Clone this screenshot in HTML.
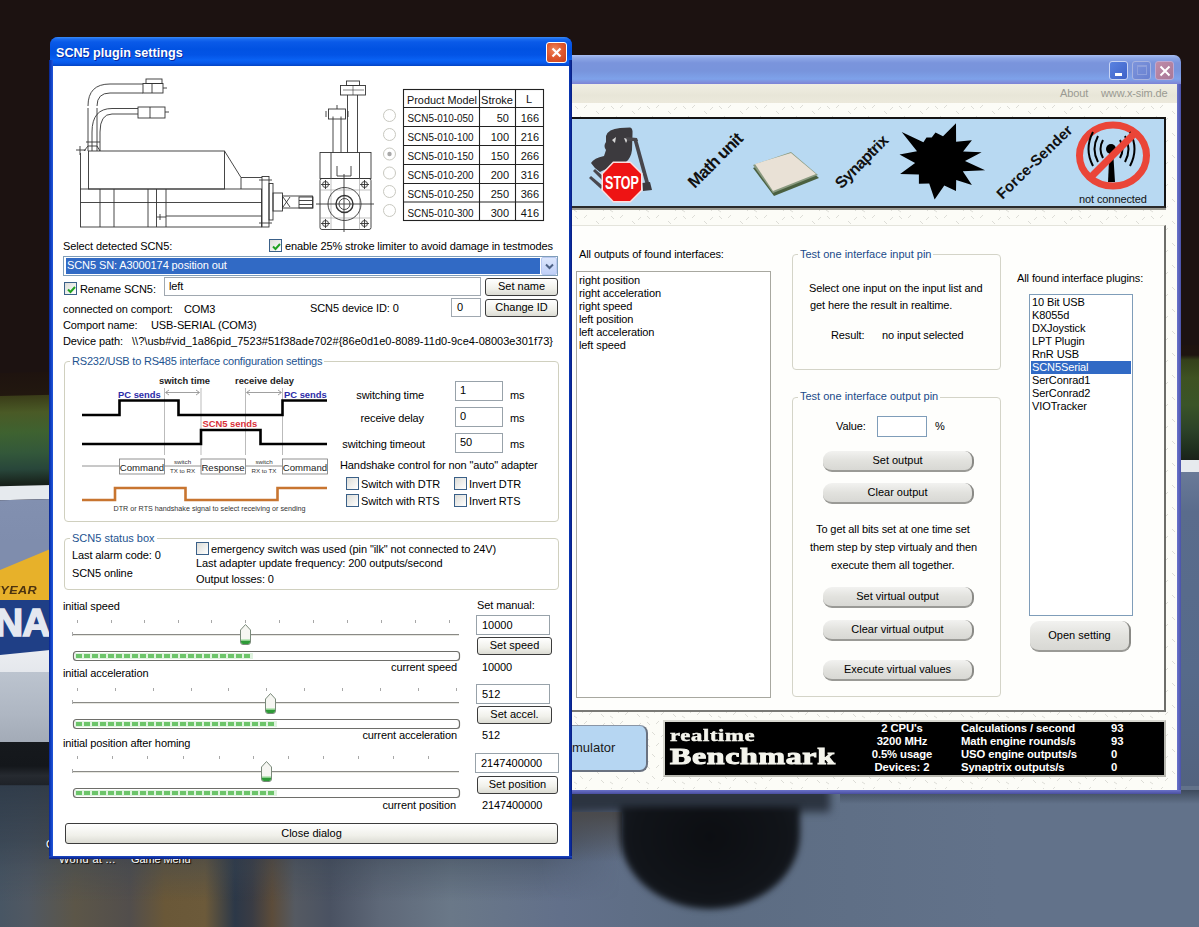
<!DOCTYPE html>
<html><head><meta charset="utf-8">
<style>
*{box-sizing:border-box;margin:0;padding:0}
html,body{width:1199px;height:927px;overflow:hidden}
body{position:relative;font-family:"Liberation Sans",sans-serif;font-size:11px;color:#000;background:#1b1010}
.a{position:absolute}
.t{position:absolute;white-space:nowrap;font-size:11px;line-height:13px;letter-spacing:-0.1px}
/* desktop */
#desk{position:absolute;left:0;top:0;width:1199px;height:927px;overflow:hidden}
/* windows */


.btn{position:absolute;border:1px solid #3c3c3c;border-radius:3px;background:linear-gradient(#fff,#f0f0ea 60%,#dcdcd4);text-align:center;font-size:11px;line-height:15px;white-space:nowrap}
.tb{position:absolute;border:1px solid #98a2aa;background:#fff;font-size:11px;line-height:16px;padding-left:4px;white-space:nowrap}
.cb{position:absolute;width:13px;height:13px;border:1px solid #3a6088;background:linear-gradient(135deg,#dcdcd7,#fff)}
.grp{position:absolute;border:1px solid #d0d0bf;border-radius:4px}
.gt{position:absolute;background:#fff;color:#0046d5;padding:0 2px;font-size:11px;line-height:13px;white-space:nowrap}
.pill{position:absolute;width:151px;height:21px;border-radius:9px;background:linear-gradient(#f2f2f0,#e2e2de 50%,#d8d8d4);border-right:2px solid #8a8a86;border-bottom:2px solid #9a9a96;text-align:center;font-size:11px;line-height:19px;white-space:nowrap}
</style></head><body>
<div id="desk">
  <!-- dark top -->
  <div class="a" style="left:0;top:0;width:1199px;height:927px;background:#1c1211"></div>
  <!-- rotated photo bands -->
  <div class="a" style="left:-100px;top:0;width:1400px;height:1000px;transform:rotate(-1.35deg);transform-origin:700px 475px">
    <div class="a" style="left:0;top:359px;width:1400px;height:25px;background:linear-gradient(#1e130f,#22180f)"></div>
    <div class="a" style="left:0;top:382px;width:1400px;height:92px;background:linear-gradient(#3a3c18 0%,#4a5a26 18%,#3e6230 40%,#33583a 62%,#28463a 80%,#1a261e 94%,#141a16 100%)"></div>
    <div class="a" style="left:0;top:472px;width:1400px;height:14px;background:#e6eaee"></div>
    <div class="a" style="left:0;top:486px;width:1400px;height:500px;background:linear-gradient(#8290b0 0px,#7e8cac 60px,#6a7c98 250px,#5c6c84 500px)"></div>
  </div>
  <div class="a" style="left:1181px;top:472px;width:18px;height:320px;background:linear-gradient(#6a7a98,#5a6c8c 40px,#566a8a 200px,#52627e)"></div>
  <div class="a" style="left:1181px;top:350px;width:18px;height:110px;background:linear-gradient(#1e1410 0px,#1e1410 5px,#34401a 10px,#3e5222 28px,#3a5428 55px,#2c4228 80px,#1e2e1e 100px,#1a221a 110px)"></div>
  <!-- car nose on left -->
  <div class="a" style="left:0;top:540px;width:60px;height:250px;background:linear-gradient(#7f8dad 0px,#7f8dad 6px,#e7b12a 6px,#e7b12a 62px,#dadde3 62px)"></div>
  <div class="a" style="left:0;top:540px;width:60px;height:35px;background:#7f8dad;clip-path:polygon(0 0,100% 0,100% 5px,0 30px)"></div>
  <div class="a" style="left:0;top:640px;width:60px;height:34px;background:linear-gradient(#eef0f3,#e4e7ec)"></div>
  <div class="a" style="left:0;top:672px;width:60px;height:72px;background:linear-gradient(#bcc4cf,#aeb6c2 60%,#a2aab6)"></div>
  <div class="a" style="left:0;top:600px;width:60px;height:56px;background:#1f3f86;clip-path:polygon(0 0,100% 0,100% 49px,0 55px)"></div>
  <div class="t" style="left:-5px;top:601px;font:bold 39px/44px 'Liberation Sans',sans-serif;color:#e4e8f0;letter-spacing:-1px;-webkit-text-stroke:1.6px #e4e8f0">NA</div>
  <div class="t" style="left:-3px;top:584px;font:italic bold 11px/12px 'Liberation Sans',sans-serif;color:#4a3210;letter-spacing:0.3px;transform:scaleX(1.15);transform-origin:0 0">'YEAR</div>
  
  
  <div class="a" style="left:0;top:742px;width:60px;height:48px;background:linear-gradient(#16191d,#14171b 50%,#262a30 70%,#1a1e24)"></div>
  <div class="a" style="left:0;top:785px;width:60px;height:60px;background:linear-gradient(#2c3642,#384858)"></div>
  <!-- bottom blurred -->
  <div class="a" style="left:0;top:786px;width:1199px;height:141px;background:linear-gradient(90deg,#485664 0px,#505862 28px,#5c5648 75px,#524e4c 130px,#6a5838 165px,#6c5a3a 205px,#2c3848 235px,#3a3c44 252px,#5c4c3a 272px,#555a62 295px,#4a5262 330px,#5e6878 380px,#6a7888 450px,#62708a 560px,#5c6c82 700px,#62728a 1000px,#62728a 1199px)"></div>
  <div class="a" style="left:0;top:786px;width:620px;height:141px;background:linear-gradient(rgba(44,56,70,.85) 0px,rgba(50,62,76,.6) 55px,rgba(58,70,84,.3) 85px,rgba(58,70,84,0) 115px);-webkit-mask-image:linear-gradient(90deg,#000 540px,transparent 620px)"></div>
  <div class="a" style="left:560px;top:786px;width:270px;height:26px;background:#2c3440;filter:blur(4px)"></div>
  <div class="a" style="left:840px;top:790px;width:360px;height:14px;background:linear-gradient(#3e4a5c,rgba(70,84,104,0))"></div>
  <div class="a" style="left:572px;top:812px;width:50px;height:50px;background:linear-gradient(#4a4a4c,rgba(80,90,100,0))"></div>
  <div class="a" style="left:620px;top:806px;width:180px;height:103px;border-radius:0 0 90px 90px / 0 0 75px 75px;background:radial-gradient(ellipse at 50% 30%,#0c0e12 0%,#111419 60%,#1c222a 100%);filter:blur(3px)"></div>
  <div class="t" style="left:59px;top:853px;color:#fff;font-size:11px;letter-spacing:0.3px;text-shadow:1px 1px 1px #000">World at ...</div>
  <div class="t" style="left:131px;top:853px;color:#fff;font-size:11px;text-shadow:1px 1px 1px #000">Game Menu</div>
  <div class="t" style="left:46px;top:838px;color:#fff;font-size:11px;text-shadow:1px 1px 1px #000">C</div>
</div>

<!-- background main window -->
<div id="bgwin">
  <!-- title bar -->
  <div class="a" style="left:560px;top:55px;width:621px;height:29px;border-radius:7px 7px 0 0;background:linear-gradient(#a8bef2 0px,#8ca6e6 3px,#7a94dc 8px,#7894dc 16px,#7ea2ea 24px,#8090dc 27px,#7c82d6 29px)"></div>
  <!-- title buttons -->
  <div class="a" style="left:1109px;top:61px;width:19px;height:19px;border:1px solid #c8d4f4;border-radius:3px;background:linear-gradient(135deg,#5a82e0,#3e62c8)"><div class="a" style="left:5px;top:11px;width:7px;height:3px;background:#fff"></div></div>
  <div class="a" style="left:1132px;top:61px;width:19px;height:19px;border:1px solid #a8b4e0;border-radius:3px;background:linear-gradient(135deg,#7c94dc,#6880d0)"><div class="a" style="left:4px;top:3px;width:10px;height:10px;border:1px solid #8ea0dc;border-top-width:2px"></div></div>
  <div class="a" style="left:1155px;top:61px;width:19px;height:19px;border:1px solid #c0a8d0;border-radius:3px;background:linear-gradient(135deg,#c08ca8,#a87898)">
    <svg class="a" style="left:2px;top:2px" width="14" height="14"><path d="M2.5 2.5L11.5 11.5M11.5 2.5L2.5 11.5" stroke="#fff" stroke-width="2"/></svg></div>
  <!-- borders -->
  <div class="a" style="left:1177px;top:84px;width:4px;height:709px;background:linear-gradient(90deg,#6a74cc,#4a52aa)"></div>
  <div class="a" style="left:560px;top:790px;width:621px;height:4px;background:linear-gradient(#6a72c8,#4a4ea0)"></div>
  <!-- menu bar -->
  <div class="a" style="left:572px;top:84px;width:605px;height:19px;background:linear-gradient(#f0eee2,#e8e6d8 60%,#ece9dc)"></div>
  <div class="t" style="left:1060px;top:87px;color:#9a9a92;font-size:11px">About</div>
  <div class="t" style="left:1101px;top:87px;color:#9a9a92;font-size:11px">www.x-sim.de</div>
  <!-- client textured -->
  <div class="a" style="left:572px;top:103px;width:605px;height:687px;background:#fcfcf7"></div>
  <svg class="a" style="left:572px;top:103px" width="605" height="686">
    <defs><pattern id="tex" width="36" height="22" patternUnits="userSpaceOnUse">
      <g stroke="#c4c4bc" stroke-width="1">
        <path d="M3 3 L6 6"/><path d="M15 2 L12 5"/><path d="M24 8 L27 11"/><path d="M33 4 L30 7"/>
        <path d="M8 13 L11 16"/><path d="M20 15 L17 18"/><path d="M29 17 L32 20"/><path d="M2 19 L5 21"/>
      </g>
    </pattern></defs>
    <rect width="605" height="686" fill="url(#tex)" opacity="0.55"/>
  </svg>
  <!-- icon panel -->
  <div class="a" style="left:572px;top:117px;width:594px;height:91px;background:#b8d9f2;border:2px solid #141414;border-left:0;border-bottom-color:#2a2a2a"></div>
  <div class="a" style="left:572px;top:208px;width:594px;height:2px;background:#9a9a92"></div>
  <!-- white content panel -->
  <div class="a" style="left:572px;top:225px;width:594px;height:487px;background:#fefefc;border-right:2px solid #6e6e6a;border-bottom:2px solid #7a7a76;border-top:1px solid #e4e4dc"></div>

  <!-- icon panel content -->
  <svg class="a" style="left:585px;top:120px" width="75" height="85" viewBox="585 120 75 85">
    <path d="M606 136 Q608 129 620 128 L630 127.5 Q633 128 632.5 134 L632 150 Q631 158 626 162 L604 170 L600 172 Q594 168 591 163 Q594 158 604 156 L606 150 Q603 146 606 142 Z" fill="#3c3a3e"/>
    <path d="M612 140 L616 137 L615 143 Z M624 138 L628 139 L626 143 Z" fill="#d8d8d8"/>
    <path d="M626 137 L637 138 L638 141 L627 141 Z" fill="#4a484c"/>
    <path d="M633.5 140 L637 139 L650 186 L646.5 187.5 Z" fill="#48464c"/>
    <path d="M642 183 L650 182 L652 190 L643 191 Z" fill="#3c3a3e"/>
    <path d="M589 178 L591 176 L603 186 L601 189 Z" fill="#4a484e"/>
    <path d="M593 171 L595 169 L604 177 L602 180 Z" fill="#4a484e"/>
  </svg>
  <svg class="a" style="left:601px;top:161px" width="42" height="42" viewBox="601 161 42 42">
    <polygon points="613,161.5 630.5,161.5 642.5,173.5 642.5,190.5 630.5,202.5 613,202.5 601.5,190.5 601.5,173.5" fill="#fbe0e0"/>
    <polygon points="613.6,163 630,163 641,174 641,190 630,201 613.6,201 603,190 603,174" fill="#ee1414"/>
    <text x="0" y="0" font-family="Liberation Sans" font-weight="bold" font-size="19" fill="#fff" transform="translate(622 189) scale(0.66 1)" text-anchor="middle">STOP</text>
  </svg>
  <div class="t" style="left:681px;top:151px;font-size:17px;line-height:20px;color:#111;font-weight:bold;transform:rotate(-45deg);letter-spacing:-0.7px">Math unit</div>
  <svg class="a" style="left:750px;top:150px" width="72" height="48" viewBox="0 0 72 48">
    <polygon points="3,18 41,3 69,28 24,46" fill="#4a6040"/>
    <polygon points="3,15 41,2 68,25 23,43" fill="#8a9a80"/>
    <polygon points="5,14 41,3 66,24 23,41" fill="#e9e1d6"/>
  </svg>
  <div class="t" style="left:828px;top:152px;font-size:16px;line-height:20px;color:#111;font-weight:bold;transform:rotate(-45deg);letter-spacing:-0.6px">Synaptrix</div>
  <svg class="a" style="left:880px;top:110px" width="120" height="100" viewBox="880 110 120 100">
    <polygon fill="#000" points="985.1,170.2 962.8,171.3 971.9,185.1 956.2,180.0 956.0,191.0 944.3,185.6 934.6,199.6 929.2,183.6 918.9,183.7 918.9,174.4 900.1,174.0 915.1,163.0 899.5,154.6 917.0,151.2 901.7,132.1 923.4,142.3 926.5,137.6 931.7,137.4 935.5,132.4 943.0,136.2 956.0,123.3 956.1,141.8 971.9,140.3 963.1,151.4 981.6,152.2 965.0,160.9"/>
  </svg>
  <div class="t" style="left:985px;top:153px;font-size:15px;line-height:18px;color:#111;font-weight:bold;transform:rotate(-44deg);letter-spacing:0.2px">Force-Sender</div>
  <svg class="a" style="left:1070px;top:115px" width="90" height="80" viewBox="1070 115 90 80">
    <ellipse cx="1113" cy="155.5" rx="33.5" ry="30.5" fill="none" stroke="#ea4538" stroke-width="7"/>
    <path d="M1109.5 150 L1108 182 L1115 182 L1113 150 Z" fill="#000"/>
    <circle cx="1111" cy="149" r="5" fill="#000"/>
    <path d="M1103 140 Q1098 149 1103 158 M1098 136 Q1091 149 1098 162 M1093 132 Q1084 149 1093 166" fill="none" stroke="#000" stroke-width="2"/>
    <path d="M1120 140 Q1125 149 1120 158 M1125 136 Q1132 149 1125 162 M1130 132 Q1139 149 1130 166" fill="none" stroke="#000" stroke-width="2"/>
    <path d="M1090 178 L1136 132" stroke="#ea4538" stroke-width="7"/>
  </svg>
  <div class="t" style="left:1079px;top:193px;font-size:11px;line-height:13px;color:#111">not connected</div>

  <!-- content panel -->
  <div class="t" style="left:579px;top:248px">All outputs of found interfaces:</div>
  <div class="a" style="left:576px;top:271px;width:195px;height:427px;background:#fff;border:1px solid #a8a8a0"></div>
  <div class="t" style="left:579px;top:274px;line-height:13px;white-space:pre">right position
right acceleration
right speed
left position
left acceleration
left speed</div>

  <div class="grp" style="left:792px;top:254px;width:209px;height:116px;border-color:#d4d4c8"></div>
  <div class="gt" style="left:798px;top:248px;color:#1a4a8a;background:#fefefc">Test one interface input pin</div>
  <div class="t" style="left:809px;top:282px">Select one input on the input list and</div>
  <div class="t" style="left:810px;top:299px">get here the result in realtime.</div>
  <div class="t" style="left:831px;top:329px">Result:</div>
  <div class="t" style="left:882px;top:329px">no input selected</div>

  <div class="grp" style="left:792px;top:397px;width:209px;height:300px;border-color:#d4d4c8"></div>
  <div class="gt" style="left:798px;top:390px;color:#1a4a8a;background:#fefefc">Test one interface output pin</div>
  <div class="t" style="left:836px;top:420px">Value:</div>
  <div class="a" style="left:877px;top:416px;width:50px;height:21px;background:#fff;border:1px solid #7f9db9"></div>
  <div class="t" style="left:935px;top:420px">%</div>
  <div class="pill" style="left:823px;top:451px">Set output</div>
  <div class="pill" style="left:823px;top:483px">Clear output</div>
  <div class="t" style="left:816px;top:523px">To get all bits set at one time set</div>
  <div class="t" style="left:810px;top:541px">them step by step virtualy and then</div>
  <div class="t" style="left:831px;top:559px">execute them all together.</div>
  <div class="pill" style="left:823px;top:587px">Set virtual output</div>
  <div class="pill" style="left:823px;top:620px">Clear virtual output</div>
  <div class="pill" style="left:823px;top:660px">Execute virtual values</div>

  <div class="t" style="left:1017px;top:272px">All found interface plugins:</div>
  <div class="a" style="left:1029px;top:294px;width:104px;height:322px;background:#fff;border:1px solid #7f9db9"></div>
  <div class="a" style="left:1031px;top:361px;width:100px;height:13px;background:#316ac5"></div>
  <div class="t" style="left:1032px;top:296px;line-height:13px;white-space:pre">10 Bit USB
K8055d
DXJoystick
LPT Plugin
RnR USB
<span style="color:#fff">SCN5Serial</span>
SerConrad1
SerConrad2
VIOTracker</div>
  <div class="pill" style="left:1030px;top:621px;width:101px;height:31px;line-height:28px">Open setting</div>
  <!-- bottom: simulator button -->
  <div class="a" style="left:540px;top:725px;width:108px;height:47px;background:#b6d6f2;border:1px solid #8a96a6;border-right:2px solid #6a7280;border-bottom:2px solid #6a7280;border-radius:8px"></div>
  <div class="t" style="left:572px;top:740px;font-size:13px;line-height:15px;color:#1a1a1a;letter-spacing:0">mulator</div>
  <!-- benchmark -->
  <div class="a" style="left:663px;top:720px;width:503px;height:57px;background:#000;border:2px solid #b8b8b0;border-left-color:#d8d8d0;border-top-color:#d8d8d0"></div>
  <div class="t" style="left:670px;top:727px;color:#f4f4ec;font:bold 17px/18px 'Liberation Serif',serif;letter-spacing:0.5px;transform:scaleX(1.33);transform-origin:0 0;-webkit-text-stroke:0.5px #f4f4ec">realtime</div>
  <div class="t" style="left:670px;top:743px;color:#f4f4ec;font:bold 24px/26px 'Liberation Serif',serif;letter-spacing:0.5px;transform:scaleX(1.33);transform-origin:0 0;-webkit-text-stroke:1px #f4f4ec">Benchmark</div>
  <div class="t" style="left:860px;top:722px;width:84px;text-align:center;color:#fff;font:bold 11.3px/13px 'Liberation Sans',sans-serif;white-space:pre">2 CPU's
3200 MHz
0.5% usage
Devices: 2</div>
  <div class="t" style="left:961px;top:722px;color:#fff;font:bold 11.3px/13px 'Liberation Sans',sans-serif;white-space:pre">Calculations / second
Math engine rounds/s
USO engine outputs/s
Synaptrix outputs/s</div>
  <div class="t" style="left:1111px;top:722px;color:#fff;font:bold 11.3px/13px 'Liberation Sans',sans-serif;white-space:pre">93
93
0
0</div>
</div>

<!-- dialog -->
<div id="dlg">
  <div class="a" style="left:50px;top:37px;width:522px;height:822px;border-radius:8px 8px 0 0;background:#0b3fd0"></div>
  <div class="a" style="left:50px;top:37px;width:522px;height:29px;border-radius:8px 8px 0 0;background:linear-gradient(#3a8cf6 0px,#1a6cf0 2px,#0a5ae8 5px,#0152e2 12px,#0354e6 18px,#0a62f4 23px,#0858ea 26px,#0444c4 29px)"></div>
  <div class="a" style="left:49px;top:60px;width:4px;height:799px;background:linear-gradient(90deg,#0a2488,#0c3cc0 40%,#2458d8)"></div>
  <div class="a" style="left:569px;top:60px;width:3px;height:799px;background:linear-gradient(90deg,#0a3ab8,#081c80)"></div>
  <div class="a" style="left:49px;top:856px;width:523px;height:3px;background:linear-gradient(#1a48c8,#0a2080)"></div>
  <div class="t" style="left:56px;top:45px;color:#fff;font-weight:bold;font-size:12.6px;line-height:16px;letter-spacing:0;text-shadow:1px 1px 0 #0a2aa0">SCN5 plugin settings</div>
  <div class="a" style="left:546px;top:42px;width:21px;height:21px;border:1px solid #fff;border-radius:3px;background:radial-gradient(circle at 40% 35%,#f08a60,#e05a30 45%,#c8401c)">
    <svg class="a" style="left:2px;top:2px" width="15" height="15"><path d="M3.5 3.5L11.5 11.5M11.5 3.5L3.5 11.5" stroke="#fff" stroke-width="2.2"/></svg></div>
  <div class="a" style="left:53px;top:66px;width:516px;height:790px;background:#fff"></div>

<svg class="a" style="left:53px;top:66px" width="516" height="789" viewBox="53 66 516 789">
 <g fill="none" stroke="#333" stroke-width="0.9">
  <!-- side view body -->
  <rect x="88.5" y="151" width="136" height="38"/>
  <path d="M224.5 151 L241 177.5 L262 177.5"/>
  <path d="M241 177.5 L241 189"/>
  <rect x="80.5" y="189" width="181" height="38"/>
  <path d="M80.5 153 L80.5 189"/>
  <path d="M80.5 202.5 L262 202.5"/>
  <path d="M100 189 V227 M114 189 V227 M148 189 V227 M156.5 189 V227 M166 189 V227"/>
  <path d="M166 216 H262"/>
  <rect x="262" y="176.5" width="7" height="50.5"/>
  <rect x="269" y="183.5" width="4" height="36.5"/>
  <rect x="273" y="193" width="9.5" height="18"/>
  <rect x="282.5" y="196" width="30" height="12"/>
  <path d="M283 197 L290 207 M290 197 L283 207"/>
  <path d="M259 180 H272 M259 223 H272"/>
  <path d="M160 214 V220 M157 217 H166"/>
  <path d="M76 150 H86 M80 146 V155"/>
  <!-- cables side -->
  <path d="M88 106 Q88 84 110 84 H143 M97 106 Q97 93 110 93 H143"/>
  <path d="M88 108 V151 M97 108 V151"/>
  <rect x="143" y="83.5" width="20" height="9.5"/>
  <rect x="146" y="79" width="16" height="4.5"/>
  <path d="M152 83.5 V93 M163 88 H167"/>
  <path d="M92 132 Q92 108.5 112 108.5 H138 M100 132 Q100 114 112 114 H138"/>
  <rect x="138" y="107" width="27" height="11"/>
  <path d="M150 107 V118 M165 112 H169"/>
  <path d="M92 132 V151 M100 132 V151 M86 142 H100"/>
  <path d="M84 151 L88 146 H97 L100 151"/>
  <!-- end view -->
  <rect x="320" y="152.5" width="51" height="26"/>
  <path d="M331 152.5 V178.5 M359.5 152.5 V178.5"/>
  <path d="M337 166 V176 H351 V166 M344 174 V232"/>
  <rect x="320" y="178.5" width="51" height="51" rx="2"/>
  <path d="M331 178.5 V229.5 M359.5 178.5 V229.5 M320 190 H371 M320 218 H371" stroke="#999" stroke-width="0.6"/>
  <circle cx="325.5" cy="184.5" r="3"/><circle cx="364.5" cy="184.5" r="3"/>
  <circle cx="325.5" cy="223.5" r="3"/><circle cx="364.5" cy="223.5" r="3"/>
  <path d="M321 184.5 H330 M325.5 180 V189 M360 184.5 H369 M364.5 180 V189 M321 223.5 H330 M325.5 219 V228 M360 223.5 H369 M364.5 219 V228"/>
  <circle cx="344.5" cy="204" r="16.5"/>
  <circle cx="344.5" cy="204" r="8.5" stroke-width="1.4"/>
  <circle cx="344.5" cy="204" r="5.5"/>
  <path d="M316 204 H374"/>
  <path d="M333 116.5 V152.5 M341 116.5 V152.5 M347.5 95 V152.5 M357.5 95 V152.5"/>
  <rect x="328.5" y="109" width="17" height="10"/>
  <path d="M326 111 V117 M348 111 V117 M337 105 V109"/>
  <rect x="340.5" y="85.5" width="25" height="9.5"/>
  <rect x="346.5" y="81" width="13" height="4.5"/>
  <path d="M343 90 H364 M353 85.5 V95" stroke-width="0.6"/>
  <rect x="299" y="197" width="14" height="11"/>
  <path d="M299 200.5 H313 M299 204.5 H313"/>
 </g>
 <!-- radios -->
 <g fill="#fff" stroke="#c8c8c0" stroke-width="1">
  <circle cx="389.5" cy="115.5" r="6"/><circle cx="389.5" cy="134.5" r="6"/><circle cx="389.5" cy="154" r="6"/>
  <circle cx="389.5" cy="173" r="6"/><circle cx="389.5" cy="191.5" r="6"/><circle cx="389.5" cy="210.5" r="6"/>
 </g>
 <circle cx="389.5" cy="154" r="2.2" fill="#a8a8a8"/>
 <!-- table -->
 <g fill="none" stroke="#222" stroke-width="1.1">
  <rect x="403.5" y="89.5" width="140" height="131"/>
  <path d="M403.5 107.5 H543.5 M403.5 126.5 H543.5 M403.5 145.5 H543.5 M403.5 164.5 H543.5 M403.5 183.5 H543.5 M403.5 202 H543.5"/>
  <path d="M479.5 89.5 V220.5 M515.5 89.5 V220.5"/>
 </g>
 <g font-family="Liberation Sans" font-size="11" fill="#111">
  <text x="407" y="103.5" textLength="70" lengthAdjust="spacingAndGlyphs">Product Model</text>
  <text x="481" y="103.5" textLength="32" lengthAdjust="spacingAndGlyphs">Stroke</text>
  <text x="526" y="103">L</text>
  <g>
   <text x="407.5" y="121.5" textLength="66" lengthAdjust="spacingAndGlyphs">SCN5-010-050</text>
   <text x="407.5" y="140.5" textLength="66" lengthAdjust="spacingAndGlyphs">SCN5-010-100</text>
   <text x="407.5" y="159.5" textLength="66" lengthAdjust="spacingAndGlyphs">SCN5-010-150</text>
   <text x="407.5" y="178.5" textLength="66" lengthAdjust="spacingAndGlyphs">SCN5-010-200</text>
   <text x="407.5" y="197.5" textLength="66" lengthAdjust="spacingAndGlyphs">SCN5-010-250</text>
   <text x="407.5" y="216.5" textLength="66" lengthAdjust="spacingAndGlyphs">SCN5-010-300</text>
  </g>
  <g text-anchor="end">
   <text x="509" y="121.5">50</text><text x="509" y="140.5">100</text><text x="509" y="159.5">150</text>
   <text x="509" y="178.5">200</text><text x="509" y="197.5">250</text><text x="509" y="216.5">300</text>
  </g>
  <g text-anchor="end">
   <text x="539" y="122">166</text><text x="539" y="141">216</text><text x="539" y="160">266</text>
   <text x="539" y="179">316</text><text x="539" y="198">366</text><text x="539" y="217">416</text>
  </g>
 </g>
</svg>

  <!-- form rows -->
  <div class="t" style="left:63px;top:240px">Select detected SCN5:</div>
  <div class="cb" style="left:269px;top:239px"><svg class="a" style="left:1px;top:1px" width="11" height="11"><path d="M2 5.5 L4.5 8 L9 3" fill="none" stroke="#21a121" stroke-width="2"/></svg></div>
  <div class="t" style="left:285px;top:240px">enable 25% stroke limiter to avoid damage in testmodes</div>
  <div class="a" style="left:63px;top:256px;width:495px;height:20px;border:1px solid #7f9db9;background:#fff"></div>
  <div class="a" style="left:66px;top:258px;width:474px;height:16px;background:#316ac5"></div>
  <div class="t" style="left:67px;top:259px;color:#fff">SCN5 SN: A3000174 position out</div>
  <div class="a" style="left:541px;top:257px;width:16px;height:18px;border:1px solid #b8c8f0;border-radius:2px;background:linear-gradient(#dce6fc,#c0d0f8)">
    <svg class="a" style="left:3px;top:5px" width="9" height="7"><path d="M1 1.5 L4.5 5 L8 1.5" fill="none" stroke="#4d6185" stroke-width="2"/></svg></div>

  <div class="cb" style="left:64px;top:282px"><svg class="a" style="left:1px;top:1px" width="11" height="11"><path d="M2 5.5 L4.5 8 L9 3" fill="none" stroke="#21a121" stroke-width="2"/></svg></div>
  <div class="t" style="left:80px;top:283px">Rename SCN5:</div>
  <div class="a" style="left:164px;top:277px;width:317px;height:19px;border:1px solid #a0a8b0;background:#fff"></div>
  <div class="t" style="left:169px;top:280px">left</div>
  <div class="btn" style="left:485px;top:278px;width:73px;height:18px">Set name</div>

  <div class="t" style="left:63px;top:303px">connected on comport:</div>
  <div class="t" style="left:184px;top:303px">COM3</div>
  <div class="t" style="left:310px;top:302px">SCN5 device ID: 0</div>
  <div class="a" style="left:451px;top:298px;width:30px;height:19px;border:1px solid #a0a8b0;background:#fff"></div>
  <div class="t" style="left:457px;top:301px">0</div>
  <div class="btn" style="left:485px;top:299px;width:73px;height:18px">Change ID</div>

  <div class="t" style="left:63px;top:319px">Comport name:</div>
  <div class="t" style="left:151px;top:319px">USB-SERIAL (COM3)</div>
  <div class="t" style="left:63px;top:335px">Device path:</div>
  <div class="t" style="left:132px;top:335px;letter-spacing:0.03px">\\?\usb#vid_1a86pid_7523#51f38ade702#{86e0d1e0-8089-11d0-9ce4-08003e301f73}</div>

  <!-- RS232 group -->
  <div class="grp" style="left:64px;top:361px;width:495px;height:161px"></div>
  <div class="gt" style="left:70px;top:355px;letter-spacing:-0.2px;color:#1d5390">RS232/USB to RS485 interface configuration settings</div>
  <svg class="a" style="left:53px;top:66px" width="516" height="789" viewBox="53 66 516 789">
   <g stroke="#aaa" stroke-width="0.8" fill="none">
    <path d="M164.5 388 V455 M201 388 V455 M245.5 388 V455 M282.5 388 V455"/>
    <path d="M166 392.5 H199 M247 392.5 H281" stroke="#888"/>
    <path d="M169 390 L165.5 392.5 L169 395 M196 390 L199.5 392.5 L196 395 M250 390 L246.5 392.5 L250 395 M278 390 L281.5 392.5 L278 395" stroke="#888"/>
   </g>
   <g stroke="#000" stroke-width="2.6" fill="none">
    <path d="M82 415 H119.5 V400.5 H178.5 V415 H282.5 V400.5 H327"/>
    <path d="M82 444 H201 V430 H260.5 V444 H327"/>
   </g>
   <g stroke="#777" stroke-width="0.8" fill="none">
    <path d="M82 466 H119.5 M164.5 466 H201 M245.5 466 H282.5"/>
    <rect x="119.5" y="459" width="45" height="15" fill="#fff"/>
    <rect x="201" y="459" width="44.5" height="15" fill="#fff"/>
    <rect x="282.5" y="459" width="45" height="15" fill="#fff"/>
   </g>
   <path d="M82 500 H115 V488 H185.5 V500 H277.5 V488 H327" stroke="#c87530" stroke-width="2.6" fill="none"/>
   <g font-family="Liberation Sans" font-weight="bold" font-size="9.4">
    <text x="159" y="384" fill="#222">switch time</text>
    <text x="235" y="384" fill="#222">receive delay</text>
    <text x="118" y="398" fill="#2c2ca8">PC sends</text>
    <text x="284" y="398" fill="#2c2ca8">PC sends</text>
    <text x="202.5" y="427" fill="#d8303a">SCN5 sends</text>
   </g>
   <g font-family="Liberation Sans" font-size="9.6" fill="#222">
    <text x="142" y="470.5" text-anchor="middle">Command</text>
    <text x="223" y="470.5" text-anchor="middle">Response</text>
    <text x="305" y="470.5" text-anchor="middle">Command</text>
   </g>
   <g font-family="Liberation Sans" font-size="6.2" fill="#333" text-anchor="middle">
    <text x="182.5" y="464">switch</text><text x="182.5" y="472.5">TX to RX</text>
    <text x="264" y="464">switch</text><text x="264" y="472.5">RX to TX</text>
   </g>
   <text x="113.5" y="510.5" font-family="Liberation Sans" font-size="7.1" fill="#333" textLength="192" lengthAdjust="spacingAndGlyphs">DTR or RTS handshake signal to select receiving or sending</text>
  </svg>
  <div class="t" style="left:340px;top:389px;width:84px;text-align:right">switching time</div>
  <div class="tb" style="left:455px;top:381px;width:48px;height:20px">1</div>
  <div class="t" style="left:510px;top:389px">ms</div>
  <div class="t" style="left:340px;top:412px;width:84px;text-align:right">receive delay</div>
  <div class="tb" style="left:455px;top:407px;width:48px;height:20px">0</div>
  <div class="t" style="left:510px;top:412px">ms</div>
  <div class="t" style="left:330px;top:438px;width:95px;text-align:right">switching timeout</div>
  <div class="tb" style="left:455px;top:433px;width:48px;height:20px">50</div>
  <div class="t" style="left:510px;top:438px">ms</div>
  <div class="t" style="left:340px;top:459px">Handshake control for non "auto" adapter</div>
  <div class="cb" style="left:346px;top:477px"></div>
  <div class="t" style="left:361px;top:478px">Switch with DTR</div>
  <div class="cb" style="left:454px;top:477px"></div>
  <div class="t" style="left:469px;top:478px">Invert DTR</div>
  <div class="cb" style="left:346px;top:494px"></div>
  <div class="t" style="left:361px;top:495px">Switch with RTS</div>
  <div class="cb" style="left:454px;top:494px"></div>
  <div class="t" style="left:469px;top:495px">Invert RTS</div>

  <!-- status box -->
  <div class="grp" style="left:64px;top:538px;width:495px;height:52px"></div>
  <div class="gt" style="left:70px;top:532px;color:#1d5390">SCN5 status box</div>
  <div class="t" style="left:72px;top:549px">Last alarm code: 0</div>
  <div class="t" style="left:72px;top:567px">SCN5 online</div>
  <div class="cb" style="left:196px;top:542px"></div>
  <div class="t" style="left:211px;top:543px">emergency switch was used (pin "ilk" not connected to 24V)</div>
  <div class="t" style="left:196px;top:557px">Last adapter update frequency: 200 outputs/second</div>
  <div class="t" style="left:196px;top:573px">Output losses: 0</div>

  <!-- sliders -->
  <div class="t" style="left:63px;top:600px">initial speed</div>
  <div class="t" style="left:477px;top:599px">Set manual:</div>
  <div class="tb" style="left:476px;top:615px;width:74px;height:20px;padding-left:5px;line-height:18px">10000</div>
  <div class="btn" style="left:477px;top:637px;width:75px;height:18px">Set speed</div>
  <div class="t" style="left:340px;top:661px;width:117px;text-align:right">current speed</div>
  <div class="t" style="left:482px;top:661px">10000</div>

  <div class="t" style="left:63px;top:667px">initial acceleration</div>
  <div class="tb" style="left:476px;top:684px;width:74px;height:20px;padding-left:5px;line-height:18px">512</div>
  <div class="btn" style="left:477px;top:706px;width:75px;height:18px">Set accel.</div>
  <div class="t" style="left:300px;top:729px;width:157px;text-align:right">current acceleration</div>
  <div class="t" style="left:482px;top:729px">512</div>

  <div class="t" style="left:63px;top:737px">initial position after homing</div>
  <div class="tb" style="left:475px;top:753px;width:84px;height:20px;padding-left:5px;line-height:18px">2147400000</div>
  <div class="btn" style="left:477px;top:776px;width:81px;height:18px">Set position</div>
  <div class="t" style="left:300px;top:799px;width:156px;text-align:right">current position</div>
  <div class="t" style="left:482px;top:799px">2147400000</div>

  <div class="btn" style="left:65px;top:823px;width:493px;height:21px;line-height:19px">Close dialog</div>

  <svg class="a" style="left:53px;top:66px" width="516" height="789" viewBox="53 66 516 789">
<g stroke="#a8a8a8" stroke-width="1"><path d="M77.5 620 V623"/><path d="M111.5 620 V623"/><path d="M144.5 620 V623"/><path d="M178.5 620 V623"/><path d="M211.5 620 V623"/><path d="M245.5 620 V623"/><path d="M279.5 620 V623"/><path d="M313.5 620 V623"/><path d="M347.5 620 V623"/><path d="M381.5 620 V623"/><path d="M415.5 620 V623"/><path d="M449.5 620 V623"/></g><path d="M72 634.5 H459" stroke="#8a8a86" stroke-width="1"/><path d="M72 635.5 H459" stroke="#e6e6e0" stroke-width="1"/><path d="M72.5 632 V636" stroke="#aaa"/><rect x="73.5" y="651.5" width="386" height="9" rx="3" fill="#fff" stroke="#6e6e6a" stroke-width="1.2"/><rect x="75" y="653" width="178" height="6" fill="#dff3df"/><g fill="#6cc46a"><rect x="76" y="654" width="6" height="4"/><rect x="84" y="654" width="6" height="4"/><rect x="92" y="654" width="6" height="4"/><rect x="100" y="654" width="6" height="4"/><rect x="108" y="654" width="6" height="4"/><rect x="116" y="654" width="6" height="4"/><rect x="124" y="654" width="6" height="4"/><rect x="132" y="654" width="6" height="4"/><rect x="140" y="654" width="6" height="4"/><rect x="148" y="654" width="6" height="4"/><rect x="156" y="654" width="6" height="4"/><rect x="164" y="654" width="6" height="4"/><rect x="172" y="654" width="6" height="4"/><rect x="180" y="654" width="6" height="4"/><rect x="188" y="654" width="6" height="4"/><rect x="196" y="654" width="6" height="4"/><rect x="204" y="654" width="6" height="4"/><rect x="212" y="654" width="6" height="4"/><rect x="220" y="654" width="6" height="4"/><rect x="228" y="654" width="6" height="4"/><rect x="236" y="654" width="6" height="4"/><rect x="244" y="654" width="6" height="4"/></g><path d="M240.5 630 L245.5 624.5 L250.5 630 V642 Q250.5 644.5 248 644.5 H243 Q240.5 644.5 240.5 642 Z" fill="#f6f6f2" stroke="#7a8a7a" stroke-width="1"/><path d="M241 640.5 H250 V642 Q250 644 248 644 H243 Q241 644 241 642 Z" fill="#2e9a38"/><path d="M241 640 H250" stroke="#8ad88a" stroke-width="1"/><g stroke="#a8a8a8" stroke-width="1"><path d="M77.5 688 V691"/><path d="M115.5 688 V691"/><path d="M153.5 688 V691"/><path d="M191.5 688 V691"/><path d="M228.5 688 V691"/><path d="M266.5 688 V691"/><path d="M304.5 688 V691"/><path d="M342.5 688 V691"/><path d="M380.5 688 V691"/><path d="M418.5 688 V691"/><path d="M456.5 688 V691"/></g><path d="M72 702.5 H459" stroke="#8a8a86" stroke-width="1"/><path d="M72 703.5 H459" stroke="#e6e6e0" stroke-width="1"/><path d="M72.5 700 V704" stroke="#aaa"/><rect x="73.5" y="719.5" width="386" height="9" rx="3" fill="#fff" stroke="#6e6e6a" stroke-width="1.2"/><rect x="75" y="721" width="202" height="6" fill="#dff3df"/><g fill="#6cc46a"><rect x="76" y="722" width="6" height="4"/><rect x="84" y="722" width="6" height="4"/><rect x="92" y="722" width="6" height="4"/><rect x="100" y="722" width="6" height="4"/><rect x="108" y="722" width="6" height="4"/><rect x="116" y="722" width="6" height="4"/><rect x="124" y="722" width="6" height="4"/><rect x="132" y="722" width="6" height="4"/><rect x="140" y="722" width="6" height="4"/><rect x="148" y="722" width="6" height="4"/><rect x="156" y="722" width="6" height="4"/><rect x="164" y="722" width="6" height="4"/><rect x="172" y="722" width="6" height="4"/><rect x="180" y="722" width="6" height="4"/><rect x="188" y="722" width="6" height="4"/><rect x="196" y="722" width="6" height="4"/><rect x="204" y="722" width="6" height="4"/><rect x="212" y="722" width="6" height="4"/><rect x="220" y="722" width="6" height="4"/><rect x="228" y="722" width="6" height="4"/><rect x="236" y="722" width="6" height="4"/><rect x="244" y="722" width="6" height="4"/><rect x="252" y="722" width="6" height="4"/><rect x="260" y="722" width="6" height="4"/><rect x="268" y="722" width="6" height="4"/></g><path d="M265.5 699 L270.5 693.5 L275.5 699 V711 Q275.5 713.5 273 713.5 H268 Q265.5 713.5 265.5 711 Z" fill="#f6f6f2" stroke="#7a8a7a" stroke-width="1"/><path d="M266 709.5 H275 V711 Q275 713 273 713 H268 Q266 713 266 711 Z" fill="#2e9a38"/><path d="M266 709 H275" stroke="#8ad88a" stroke-width="1"/><g stroke="#a8a8a8" stroke-width="1"><path d="M77.5 756 V759"/><path d="M112.5 756 V759"/><path d="M147.5 756 V759"/><path d="M183.5 756 V759"/><path d="M219.5 756 V759"/><path d="M253.5 756 V759"/><path d="M288.5 756 V759"/><path d="M323.5 756 V759"/><path d="M358.5 756 V759"/><path d="M393.5 756 V759"/><path d="M428.5 756 V759"/></g><path d="M72 771.5 H459" stroke="#8a8a86" stroke-width="1"/><path d="M72 772.5 H459" stroke="#e6e6e0" stroke-width="1"/><path d="M72.5 769 V773" stroke="#aaa"/><rect x="73.5" y="788.5" width="386" height="9" rx="3" fill="#fff" stroke="#6e6e6a" stroke-width="1.2"/><rect x="75" y="790" width="202" height="6" fill="#dff3df"/><g fill="#6cc46a"><rect x="76" y="791" width="6" height="4"/><rect x="84" y="791" width="6" height="4"/><rect x="92" y="791" width="6" height="4"/><rect x="100" y="791" width="6" height="4"/><rect x="108" y="791" width="6" height="4"/><rect x="116" y="791" width="6" height="4"/><rect x="124" y="791" width="6" height="4"/><rect x="132" y="791" width="6" height="4"/><rect x="140" y="791" width="6" height="4"/><rect x="148" y="791" width="6" height="4"/><rect x="156" y="791" width="6" height="4"/><rect x="164" y="791" width="6" height="4"/><rect x="172" y="791" width="6" height="4"/><rect x="180" y="791" width="6" height="4"/><rect x="188" y="791" width="6" height="4"/><rect x="196" y="791" width="6" height="4"/><rect x="204" y="791" width="6" height="4"/><rect x="212" y="791" width="6" height="4"/><rect x="220" y="791" width="6" height="4"/><rect x="228" y="791" width="6" height="4"/><rect x="236" y="791" width="6" height="4"/><rect x="244" y="791" width="6" height="4"/><rect x="252" y="791" width="6" height="4"/><rect x="260" y="791" width="6" height="4"/><rect x="268" y="791" width="6" height="4"/></g><path d="M261.5 767 L266.5 761.5 L271.5 767 V779 Q271.5 781.5 269 781.5 H264 Q261.5 781.5 261.5 779 Z" fill="#f6f6f2" stroke="#7a8a7a" stroke-width="1"/><path d="M262 777.5 H271 V779 Q271 781 269 781 H264 Q262 781 262 779 Z" fill="#2e9a38"/><path d="M262 777 H271" stroke="#8ad88a" stroke-width="1"/>
  </svg>
</div>
</body></html>
